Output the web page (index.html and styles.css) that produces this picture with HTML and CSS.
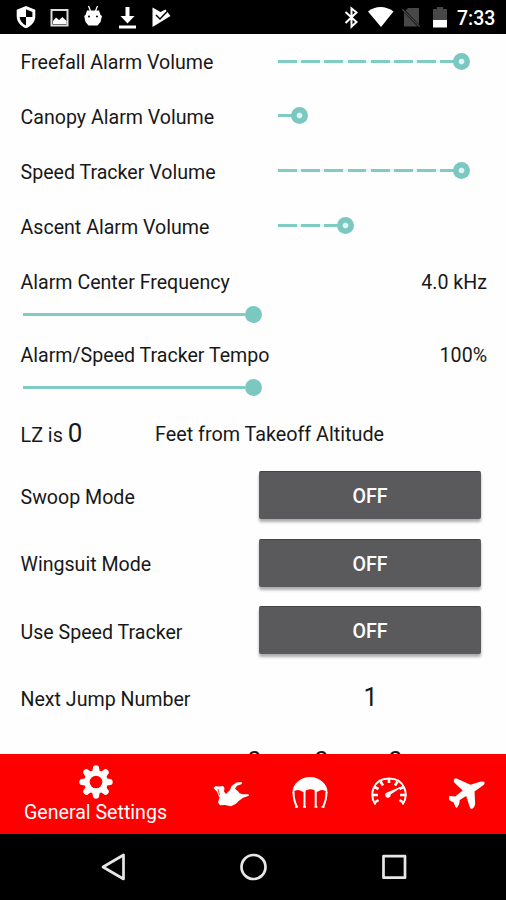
FILE: index.html
```html
<!DOCTYPE html>
<html lang="en">
<head>
<meta charset="utf-8">
<title>General Settings</title>
<link rel="stylesheet" href="styles.css">
</head>
<body>
<div class="phone">
  <header class="status">
    <svg class="status-left" viewBox="0 0 180 34" fill="#fff">
      <path fill-rule="evenodd" d="M26 6l9.300 3.800v6.500c0 5.500-4 10-9.300 12-5.300-2-9.300-6.500-9.300-12V9.800zM26 9.300v7.700h-6.400c.4 3.800 2.800 6.800 6.400 8.400V17h6.400v-5z"/>
      <path fill="none" stroke="#ddd" stroke-width="2" d="M51.500 10h16v15.500h-16z"/>
      <path d="M53 24v-3l3-3.500 3 2.500 3.500-3 4 4v3z"/>
      <path d="M88.500 6l2 5M97.500 6l-2 5" stroke="#fff" stroke-width="1.300"/>
      <path fill-rule="evenodd" d="M87 10.500h12l1.500 4.500 1.500 1-1.500 6-3 3.500h-9l-3-3.500-1.300-6 1.300-1zM88 16.500a1 1 0 1 0 2 0 1 1 0 1 0-2 0M96 16.500a1 1 0 1 0 2 0 1 1 0 1 0-2 0"/>
      <path d="M125.500 7h4v9h5l-7 7.500-7-7.500h5zM119 25.500h17v3h-17z"/>
      <path d="M152.500 7.500l8 4.500 5-2.500 5 6.500-18 11z"/>
      <path fill="none" stroke="#000" stroke-width="1.500" d="M156 15l4 4 8.500-9"/>
    </svg>
    <svg class="status-right" viewBox="340 0 110 34" fill="#fff">
      <path fill="none" stroke="#fff" stroke-width="2" d="M345.500 12l11 10-5 4.700V8.300l5 4.200-11 10.500"/>
      <path d="M368 11.500c7-6 18-6 25.500 0L381 27z"/>
      <path fill="#484848" d="M408 8h11v16.500l-13.500-14zM404 12.500l13.500 14H404z"/>
      <path stroke="#484848" stroke-width="1.500" d="M402.500 9.500l17 17"/>
      <path fill="#484848" d="M433 9h4V7h6v2h4v11h-14z"/>
      <path d="M433 20h14v7.500h-14z"/>
    </svg>
    <span class="clock">7:33</span>
  </header>

  <main class="settings">
    <div class="row volume"><span class="label">Freefall Alarm Volume</span><div class="slider"><i class="track dashed" style="width:176px"></i><i class="knob ring"></i></div></div>
    <div class="row volume"><span class="label">Canopy Alarm Volume</span><div class="slider"><i class="track dashed" style="width:14px"></i><i class="knob ring"></i></div></div>
    <div class="row volume"><span class="label">Speed Tracker Volume</span><div class="slider"><i class="track dashed" style="width:176px"></i><i class="knob ring"></i></div></div>
    <div class="row volume"><span class="label">Ascent Alarm Volume</span><div class="slider"><i class="track dashed" style="width:60px"></i><i class="knob ring"></i></div></div>

    <div class="range">
      <div class="range-head"><span class="label">Alarm Center Frequency</span><span class="value">4.0 kHz</span></div>
      <div class="slider"><i class="track" style="width:222px"></i><i class="knob"></i></div>
    </div>
    <div class="range">
      <div class="range-head"><span class="label">Alarm/Speed Tracker Tempo</span><span class="value">100%</span></div>
      <div class="slider"><i class="track" style="width:222px"></i><i class="knob"></i></div>
    </div>

    <div class="row landing"><span class="lz">LZ is <span class="number">0</span></span><span class="feet">Feet from Takeoff Altitude</span></div>

    <div class="row toggle"><span class="label">Swoop Mode</span><button class="button">OFF</button></div>
    <div class="row toggle"><span class="label">Wingsuit Mode</span><button class="button">OFF</button></div>
    <div class="row toggle"><span class="label">Use Speed Tracker</span><button class="button">OFF</button></div>
    <div class="row jump"><span class="label">Next Jump Number</span><span class="number jump-number">1</span></div>
    <div class="digits"><span>0</span><span>0</span><span>0</span></div>
  </main>

  <nav class="tabs">
    <div class="tab active">
      <svg class="gear" viewBox="-17 -17 34 34">
        <g fill="#fff">
          <g id="teeth"><path id="tooth" d="M-3.800-10L-2.800-15.500Q0-18 2.800-15.500L3.800-10V10L2.800 15.500Q0 18-2.800 15.500L-3.800 10z"/>
          <use href="#tooth" transform="rotate(45)"/></g>
          <use href="#teeth" transform="rotate(90)"/>
          <circle r="11.800"/>
        </g>
        <circle r="6.300" fill="#f00"/>
      </svg>
      <span>General Settings</span>
    </div>
    <div class="tab"><svg class="icon" viewBox="212 775 38 38" fill="#fff">
      <path d="M213.500 788l2-2 3 .5 4.500-.5 1.500 2-.5 3.500 2 2.500 2.500-2.500 1.500-1.500 1.500-4 5-3.500 5-.5.500 2-5 1.700-2 3 3 2.500 1.500 2 3 1h6l.5 1.500-6 2-4 3-3 3-5 2.500-6-1.200-5 .2-2-3 1.500-4.500-2.500-6z"/>
      <path d="M218 789l1.500 6" fill="none" stroke="#f00" stroke-width=".8"/>
    </svg></div>
    <div class="tab"><svg class="icon" viewBox="291 775 38 38" fill="#fff">
      <path d="M292.500 793c-.5-9 8-16 17.500-16s18 7 17.500 16l-3-2.500q-3-1.500-6 .8l-2.500 1q-1-3-5.500-3t-6 3l-3-1q-3-2.300-6-.8z"/>
      <path fill="none" stroke="#fff" stroke-width="2" d="M293.500 792q0 8 3.500 15M326.500 792q0 8-3.500 15M304.500 790v17M315.700 790v17"/>
      <path fill="none" stroke="#fff" stroke-width="1.500" d="M295 807h3M303 807h3M314.500 807h3M321.500 807h3"/>
    </svg></div>
    <div class="tab"><svg class="icon" viewBox="370 775 38 38" fill="none" stroke="#fff">
      <path stroke-width="2" d="M375.500 804.500c-6.500-9-3-26 13.500-26s20 17 13.500 26"/>
      <path stroke-width="2.600" d="M389 779v4M380.500 781.500l2.500 4M397.500 781.500l-2.500 4M374.500 787l4 2M403.500 787l-4 2M373 795h5M405 795h-5M374 803l4.500-3M404 803l-4.500-3"/>
      <path fill="#fff" stroke="none" d="M387 792.500l13-5.500.5 1-10 6.500a2.700 2.700 0 1 1-3.500-2"/>
    </svg></div>
    <div class="tab"><svg class="icon" viewBox="449 775 38 38" fill="#fff">
      <path d="M453.700 780.500q0-2.300 2.300-2.300l14.500 6.600 9.500-3q4-1 4.500.5.500 2-2 3.500l-8 5.800.7 12.500q-.5 3.500-3.200 5-1.800 0-2.300-2l-3.500-11-6.500 4-.5 4-2 3.500q-1.500.3-2-1l-1.500-4-3-1.500-2.500-2.500q-.5-2 1.500-2.500l5.500.5 7.500-6-8.500-8z"/>
    </svg></div>
  </nav>

  <footer class="navigation">
    <svg viewBox="0 0 506 67" fill="none" stroke="#e7e7e7" stroke-width="2.700" stroke-linejoin="round">
      <path d="M103 33l20.500-12v24z"/>
      <circle cx="253.500" cy="33" r="12"/>
      <rect x="383.500" y="22.200" width="21.500" height="21.500"/>
    </svg>
  </footer>
</div>
</body>
</html>
```
FILE: styles.css
```css
* { box-sizing: border-box; }
body { margin: 0; background: #fff; font-family: Roboto, "Liberation Sans", sans-serif; font-size: 19.600px; line-height: 24px; color: #181818; }
.phone { width: 506px; height: 900px; display: flex; flex-direction: column; overflow: hidden; }
.status { height: 34px; flex: none; background: #000; color: #fff; display: flex; align-items: center; }
.status-left { width: 180px; height: 34px; margin-right: 160px; flex: none; }
.status-right { width: 110px; height: 34px; flex: none; }
.clock { margin-left: 7px; padding-top: 3px; font-weight: 500; font-size: 19.500px; }
.settings { height: 720px; flex: none; overflow: hidden; padding: 1px 19px 0 20.500px; background: #fefefe; }
.row { display: flex; align-items: center; white-space: nowrap; }
.row .label { padding-top: 2px; }
.volume { height: 54.800px; }
.volume .label { width: 257.500px; }
.volume .slider { margin-bottom: 2.500px; }
.slider { display: flex; align-items: center; }
.track { height: 2.800px; background: #80cbc4; }
.dashed { height: 3px; background: repeating-linear-gradient(90deg, #80cbc4 0 18.800px, #e6f7f5 18.800px 23.200px); }
.knob { width: 17px; height: 17px; border-radius: 50%; background: #7bc8c1; flex: none; }
.ring { margin-left: -1.500px; background: radial-gradient(circle, #e0f4f3 0 2.300px, #7bc8c1 3.300px); }
.range { height: 73px; padding-top: 17px; }
.range-head { display: flex; justify-content: space-between; height: 24px; }
.range .slider { margin: 10.500px 0 0 2.500px; }
.landing { height: 64px; padding-top: 5px; font-size: 19.750px; }
.lz { width: 134.500px; }
.number { font-size: 26px; }
.toggle { height: 67.500px; padding-bottom: 2px; }
.toggle .label { width: 238px; }
.button { width: 222px; height: 48px; margin-bottom: 3px; padding: 3px 0 0 1px; border: 0; border-top: 1px solid #444; border-radius: 2px; background: #5a5a5c; color: #fff; font: 500 19.600px/24px Roboto, sans-serif; box-shadow: 0 3px 3px rgba(0,0,0,.32); }
.jump { height: 66px; padding-bottom: 2px; }
.jump .label { width: 239px; }
.jump-number { width: 222px; text-align: center; padding-bottom: 2px; font-size: 25px; }
.digits { display: grid; grid-template-columns: 67px 74px 20px; padding: 13.500px 0 0 226.500px; font-size: 26px; line-height: 30px; }
.tabs { height: 79.500px; flex: none; background: #f00; color: #fff; display: flex; }
.tab { width: 79px; flex: none; display: flex; justify-content: center; align-items: center; }
.active { width: 191px; flex-direction: column; justify-content: flex-start; padding-top: 10.500px; }
.gear { width: 34px; height: 34px; flex: none; }
.active span { line-height: 24px; margin-top: 2px; }
.icon { width: 38px; height: 38px; }
.navigation { height: 67px; flex: none; background: #000; }
.navigation svg { display: block; width: 506px; height: 67px; }
```
